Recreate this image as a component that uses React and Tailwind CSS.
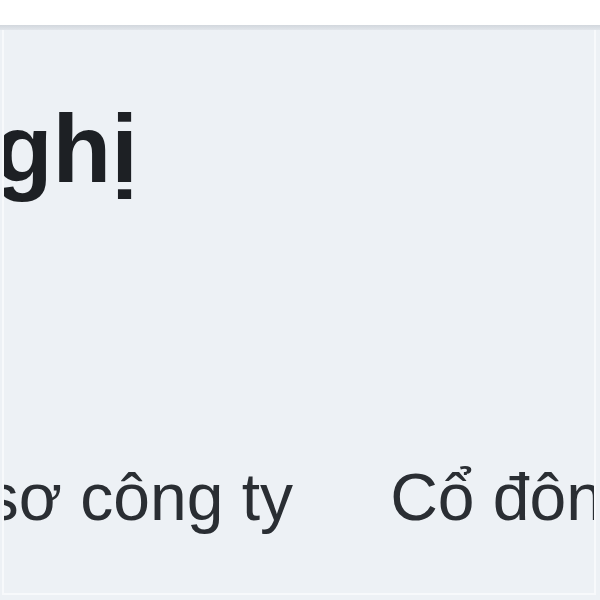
export default function App() {
  const tabs = ["Hồ sơ công ty", "Cổ đông", "Ban lãnh đạo"];

  return (
    <div className="w-[600px] h-[600px] overflow-hidden flex flex-col bg-[#edf1f5] font-['Liberation_Sans',Arial,sans-serif]">
      <div className="h-[25px] shrink-0 bg-white" />
      <div className="h-[5px] shrink-0 bg-gradient-to-b from-[#d2d7dd] to-[#e2e6eb]" />

      <div className="flex-1 min-h-0 flex flex-col pl-[2px] pr-[4px] pb-[5px]">
        <div className="flex-1 min-h-0 flex flex-col overflow-hidden border-2 border-t-0 border-[#f7f9fb]">
          <h1 className="mt-[71px] ml-[-250px] whitespace-nowrap text-[96px] leading-[96px] font-bold text-[#1d2024]">
            Hội nghị
          </h1>

          <div className="mt-[267px] ml-[-121px] flex gap-[97px] whitespace-nowrap text-[66px] leading-[66px] text-[#2a2e33]">
            {tabs.map((t) => (
              <span key={t}>{t}</span>
            ))}
          </div>
        </div>
      </div>
    </div>
  );
}
